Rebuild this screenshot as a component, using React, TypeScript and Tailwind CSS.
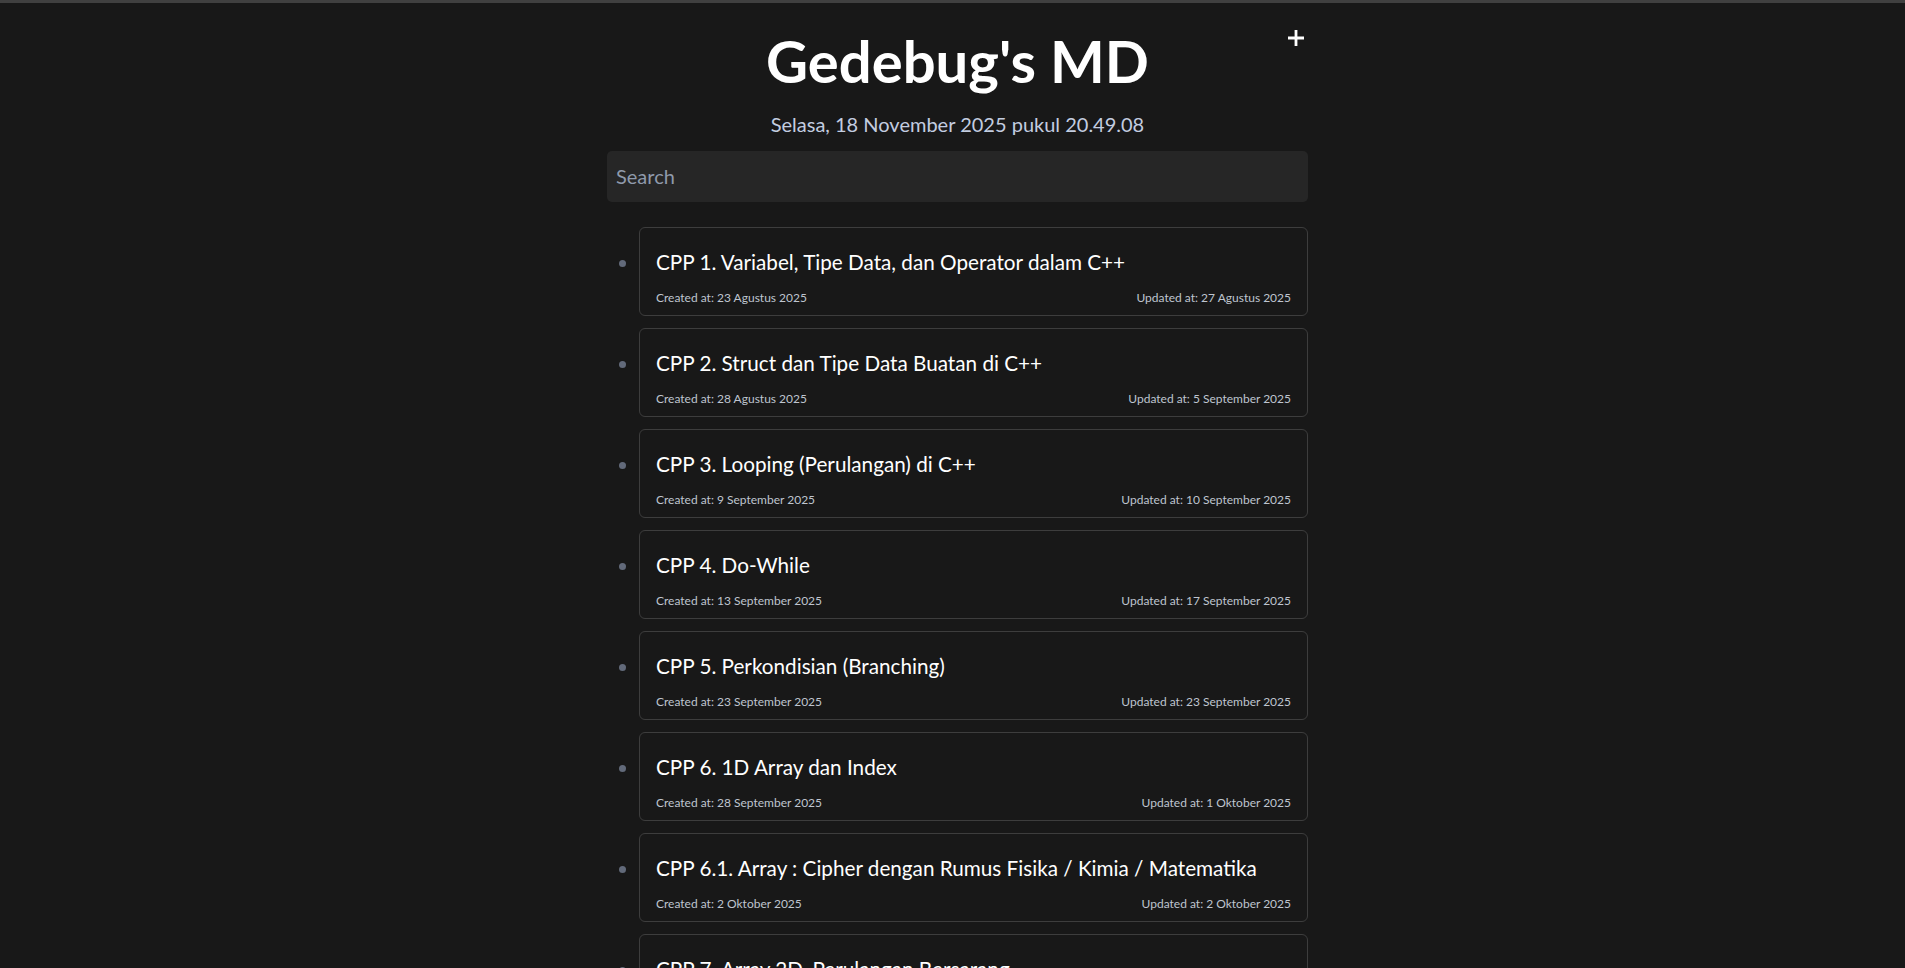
import React from "react";

const posts = [
  { t: "CPP 1. Variabel, Tipe Data, dan Operator dalam C++", c: "23 Agustus 2025", u: "27 Agustus 2025" },
  { t: "CPP 2. Struct dan Tipe Data Buatan di C++", c: "28 Agustus 2025", u: "5 September 2025" },
  { t: "CPP 3. Looping (Perulangan) di C++", c: "9 September 2025", u: "10 September 2025" },
  { t: "CPP 4. Do-While", c: "13 September 2025", u: "17 September 2025" },
  { t: "CPP 5. Perkondisian (Branching)", c: "23 September 2025", u: "23 September 2025" },
  { t: "CPP 6. 1D Array dan Index", c: "28 September 2025", u: "1 Oktober 2025" },
  { t: "CPP 6.1. Array : Cipher dengan Rumus Fisika / Kimia / Matematika", c: "2 Oktober 2025", u: "2 Oktober 2025" },
  { t: "CPP 7. Array 2D, Perulangan Bersarang", c: "4 Oktober 2025", u: "6 Oktober 2025" },
  { t: "CPP 8. Fungsi dan Prosedur", c: "8 Oktober 2025", u: "10 Oktober 2025" },
];

export default function App() {
  return (
    <div
      className="min-h-screen bg-[#181818] border-t-[3px] border-[#404040] pl-[10px]"
      style={{ fontFamily: "Lato, 'Noto Sans', sans-serif" }}
    >
      <div className="relative mx-auto w-[701px] pt-[26px] pb-10">
        <h1 className="text-center text-[58px] leading-[64px] font-bold text-white">Gedebug's MD</h1>
        <button className="absolute right-[4px] top-[27px] w-[16px] h-[16px]" aria-label="add">
          <svg viewBox="0 0 16 16" width="16" height="16">
            <path d="M8 0V16M0 8H16" stroke="#ffffff" strokeWidth="2.8" />
          </svg>
        </button>
        <p className="mt-[17px] text-center text-[20px] leading-[28px] text-[#c3cde0]">
          Selasa, 18 November 2025 pukul 20.49.08
        </p>
        <input
          placeholder="Search"
          className="mt-[13px] block w-full h-[51px] rounded-[5px] bg-[#262626] px-[9px] pb-[2px] text-[20px] text-white placeholder:text-[#8f9aab] outline-none"
        />
        <ul className="mt-[25px] list-disc pl-8 marker:text-[#626a7a] flex flex-col gap-[12px]">
          {posts.map((p) => (
            <li key={p.t} className="text-[20px]">
              <div className="rounded-md border border-[#3d3d3d] px-4 pt-[20px] pb-[9px]">
                <h2 className="text-[20.7px] leading-[28px] text-white">{p.t}</h2>
                <div className="mt-[14px] flex justify-between text-[12px] leading-[16px] text-[#bfc5cf]">
                  <span>Created at: {p.c}</span>
                  <span>Updated at: {p.u}</span>
                </div>
              </div>
            </li>
          ))}
        </ul>
      </div>
    </div>
  );
}
